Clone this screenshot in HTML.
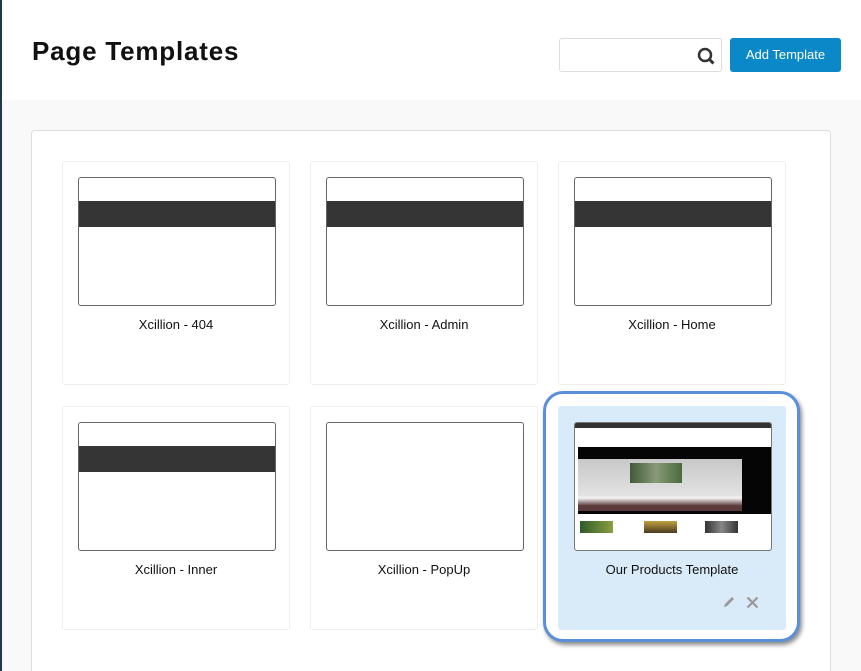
<!DOCTYPE html>
<html><head><meta charset="utf-8"><style>
*{margin:0;padding:0;box-sizing:border-box}
html,body{width:861px;height:671px;overflow:hidden}
body{background:#f9f9f9;font-family:"Liberation Sans",sans-serif;position:relative}
.hdr{position:absolute;left:0;top:0;width:861px;height:100px;background:#fff}
h1{position:absolute;left:32px;top:36px;font-size:26px;font-weight:bold;color:#111;letter-spacing:0.8px}
.search{position:absolute;left:559px;top:38px;width:163px;height:34px;border:1px solid #ddd;border-radius:3px;background:#fff}
.btn{position:absolute;left:730px;top:38px;width:111px;height:34px;background:#0a88c8;border-radius:3px;color:#fff;font-size:13px;text-align:center;line-height:34px}
.leftline{position:absolute;left:0;top:0;width:2px;height:671px;background:#1e3a4a}
.panel{position:absolute;left:31px;top:130px;width:800px;height:560px;background:#fff;border:1px solid #ddd;border-radius:4px}
.card{position:absolute;width:228px;height:224px;background:#fff;border:1px solid #eee;border-radius:3px}
.thumb{position:absolute;left:15px;top:15px;width:198px;height:129px;border:1px solid #666;border-radius:3px;background:#fff;overflow:hidden}
.band{position:absolute;left:0;top:23px;width:100%;height:26px;background:#353535}
.lbl{position:absolute;left:0;top:155px;width:100%;text-align:center;font-size:13px;color:#111}
.sel{position:absolute;left:543px;top:391px;width:257px;height:251px;border:3px solid #5b8fd8;border-radius:20px;background:#fff;box-shadow:2px 3px 4px rgba(0,0,0,.45)}
</style></head><body>
<div class="hdr"></div>
<div class="leftline"></div>
<h1>Page Templates</h1>
<div class="search"><svg style="position:absolute;right:5px;top:7px" width="20" height="20" viewBox="0 0 20 20"><circle cx="9" cy="9" r="6" fill="none" stroke="#333" stroke-width="2.5"/><line x1="13" y1="13" x2="17.5" y2="17.5" stroke="#333" stroke-width="3"/></svg></div>
<div class="btn">Add Template</div>
<div class="panel"></div>

<div class="card" style="left:62px;top:161px"><div class="thumb"><div class="band"></div></div><div class="lbl">Xcillion - 404</div></div>
<div class="card" style="left:310px;top:161px"><div class="thumb"><div class="band"></div></div><div class="lbl">Xcillion - Admin</div></div>
<div class="card" style="left:558px;top:161px"><div class="thumb"><div class="band"></div></div><div class="lbl">Xcillion - Home</div></div>
<div class="card" style="left:62px;top:406px"><div class="thumb"><div class="band"></div></div><div class="lbl">Xcillion - Inner</div></div>
<div class="card" style="left:310px;top:406px"><div class="thumb"></div><div class="lbl">Xcillion - PopUp</div></div>

<div class="sel"></div>
<div class="card" style="left:558px;top:406px;background:#d9eaf8;border-color:#d9eaf8">
 <div class="thumb" style="border-color:#777">
  <div style="position:absolute;left:0;top:0;width:100%;height:5px;background:#333"></div>
  <div style="position:absolute;left:3px;top:24px;width:193px;height:67px;background:#050505"></div>
  <div style="position:absolute;left:3px;top:36px;width:164px;height:52px;background:linear-gradient(#c8c8c8,#e2e2e2 70%,#f4f4f4 75%,#5a3a3a 90%)"></div>
  <div style="position:absolute;left:55px;top:40px;width:52px;height:20px;background:linear-gradient(90deg,#3f5a3a,#8a9a7a,#4a6a3a)"></div>
  <div style="position:absolute;left:5px;top:98px;width:33px;height:12px;background:linear-gradient(90deg,#2f5a2a,#8aa040)"></div>
  <div style="position:absolute;left:69px;top:98px;width:33px;height:12px;background:linear-gradient(#c0a040,#4a3a20)"></div>
  <div style="position:absolute;left:130px;top:98px;width:33px;height:12px;background:linear-gradient(90deg,#333,#888,#333)"></div>
 </div>
 <div class="lbl">Our Products Template</div>
 <svg style="position:absolute;left:163px;top:188px" width="14" height="14" viewBox="0 0 14 14"><path d="M2 12 L3 9 L10 2 L12 4 L5 11 Z" fill="#999"/></svg>
 <svg style="position:absolute;left:187px;top:189px" width="13" height="13" viewBox="0 0 13 13"><path d="M1.5 1.5 L11.5 11.5 M11.5 1.5 L1.5 11.5" stroke="#999" stroke-width="2.2"/></svg>
</div>
</body></html>
